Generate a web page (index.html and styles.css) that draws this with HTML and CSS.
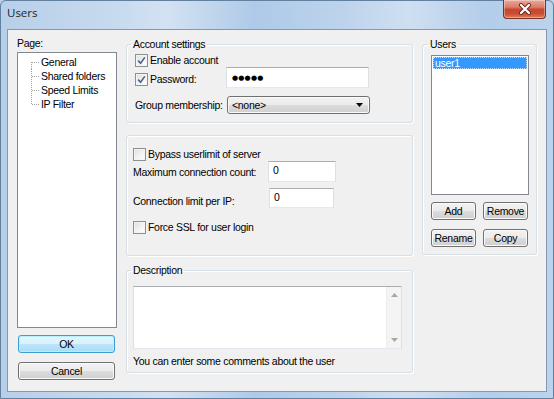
FILE: index.html
```html
<!DOCTYPE html>
<html>
<head>
<meta charset="utf-8">
<title>Users</title>
<link rel="stylesheet" href="styles.css">
</head>
<body>
<div class="window">
  <div class="titlebar">
    <span class="title">Users</span>
    <div class="close">
      <svg width="14" height="12" viewBox="0 0 14 12"><path d="M3 2 L11 10 M11 2 L3 10" stroke="#6b2a20" stroke-width="4" stroke-linecap="round"/><path d="M3 2 L11 10 M11 2 L3 10" stroke="#fff" stroke-width="2.2" stroke-linecap="round"/></svg>
    </div>
  </div>
  <div class="client">
    <div class="col-left">
      <div class="page-label">Page:</div>
      <div class="tree">
        <div class="tree-item"><svg class="conn" width="9" height="14"><path d="M0.5 7 V14 M1 7.5 H9" stroke="#a0a0a0" stroke-dasharray="1 1"/></svg><span>General</span></div>
        <div class="tree-item"><svg class="conn" width="9" height="14"><path d="M0.5 0 V14 M1 7.5 H9" stroke="#a0a0a0" stroke-dasharray="1 1"/></svg><span>Shared folders</span></div>
        <div class="tree-item"><svg class="conn" width="9" height="14"><path d="M0.5 0 V14 M1 7.5 H9" stroke="#a0a0a0" stroke-dasharray="1 1"/></svg><span>Speed Limits</span></div>
        <div class="tree-item"><svg class="conn" width="9" height="14"><path d="M0.5 0 V7 M1 7.5 H9" stroke="#a0a0a0" stroke-dasharray="1 1"/></svg><span>IP Filter</span></div>
      </div>
      <div class="btn btn-default btn-ok">OK</div>
      <div class="btn btn-cancel">Cancel</div>
    </div>

    <div class="col-mid">
      <fieldset class="group g-account">
        <legend>Account settings</legend>
        <div class="inner">
          <label class="check-row"><span class="cb checked"><svg width="9" height="9" viewBox="0 0 9 9"><path d="M1.2 4.6 L3.6 7.2 L7.8 1.4" fill="none" stroke="#4a5f8f" stroke-width="1.6"/></svg></span><span>Enable account</span></label>
          <div class="pw-row">
            <label class="check-row pw-label"><span class="cb checked"><svg width="9" height="9" viewBox="0 0 9 9"><path d="M1.2 4.6 L3.6 7.2 L7.8 1.4" fill="none" stroke="#4a5f8f" stroke-width="1.6"/></svg></span><span>Password:</span></label>
            <div class="textbox pw-box"><span class="dots">●●●●●</span></div>
          </div>
          <div class="grp-row">
            <span class="grp-label">Group membership:</span>
            <div class="combo"><span>&lt;none&gt;</span><svg width="7" height="4" viewBox="0 0 7 4"><path d="M0 0 H7 L3.5 4 Z" fill="#000"/></svg></div>
          </div>
        </div>
      </fieldset>

      <fieldset class="group g-limits">
        <div class="inner">
          <label class="check-row"><span class="cb"></span><span>Bypass userlimit of server</span></label>
          <div class="num-row row-max">
            <span class="num-label">Maximum connection count:</span>
            <div class="textbox num-box">0</div>
          </div>
          <div class="num-row row-ip">
            <span class="num-label">Connection limit per IP:</span>
            <div class="textbox num-box">0</div>
          </div>
          <label class="check-row row-ssl"><span class="cb"></span><span>Force SSL for user login</span></label>
        </div>
      </fieldset>

      <fieldset class="group g-desc">
        <legend>Description</legend>
        <div class="inner">
          <div class="memo">
            <div class="memo-body"></div>
            <div class="vscroll">
              <svg width="7" height="4" viewBox="0 0 7 4"><path d="M0 4 H7 L3.5 0 Z" fill="#a8a8a8"/></svg>
              <svg width="7" height="4" viewBox="0 0 7 4"><path d="M0 0 H7 L3.5 4 Z" fill="#a8a8a8"/></svg>
            </div>
          </div>
          <div class="hint">You can enter some comments about the user</div>
        </div>
      </fieldset>
    </div>

    <div class="col-right">
      <fieldset class="group g-users">
        <legend>Users</legend>
        <div class="inner">
          <div class="listbox">
            <div class="list-item selected">user1</div>
          </div>
          <div class="user-btns">
            <div class="btn">Add</div>
            <div class="btn">Remove</div>
            <div class="btn">Rename</div>
            <div class="btn">Copy</div>
          </div>
        </div>
      </fieldset>
    </div>
  </div>
</div>
</body>
</html>
```

FILE: styles.css
```css
* { box-sizing: border-box; }
html, body { margin: 0; padding: 0; }
body {
  width: 554px;
  height: 399px;
  overflow: hidden;
  font-family: "Liberation Sans", Arial, sans-serif;
  font-size: 10.5px;
  letter-spacing: -0.3px;
  color: #000;
  background: #b9d0ea;
}

.window {
  width: 554px;
  height: 399px;
  display: flex;
  flex-direction: column;
  border: 1px solid #62809f;
  border-radius: 6px 6px 0 0;
  background: linear-gradient(to right, #b8cfe9 0%, #c8dbef 22%, #d3e2f2 30%, #aecae8 46%, #bdd3ec 62%, #cfdff1 74%, #b3cdea 88%, #bcd3ec 100%);
}

.titlebar {
  height: 28px;
  display: flex;
  justify-content: space-between;
  align-items: flex-start;
}
.title {
  font-family: "Open Sans", "Liberation Sans", sans-serif;
  font-size: 11.5px;
  letter-spacing: 0;
  color: #1e1e1e;
  padding: 4px 0 0 6px;
}
.close {
  width: 43px;
  height: 19px;
  margin: -1px 7px 0 0;
  border: 1px solid #7b3024;
  border-top: none;
  border-radius: 0 0 4px 4px;
  background: linear-gradient(#eaa99a 0%, #dc7b67 40%, #c8472f 52%, #c94c33 75%, #dc7d5c 100%);
  box-shadow: inset 0 0 0 1px rgba(255,255,255,0.35);
  display: flex;
  align-items: center;
  justify-content: center;
}

.client {
  height: 363px;
  margin: 0 6px;
  border: 1px solid #8399b3;
  background: #f0f0f0;
  display: flex;
  padding: 0 9px;
  gap: 9px;
}

/* left column */
.col-left {
  width: 100px;
  display: flex;
  flex-direction: column;
  padding-top: 7px;
}
.page-label {
  line-height: 13px;
  height: 13px;
  margin-bottom: 2px;
}
.tree {
  height: 276px;
  background: #fff;
  border: 1px solid #828790;
  padding: 2px 0 0 13px;
}
.tree-item {
  display: flex;
  align-items: center;
  height: 14px;
  line-height: 14px;
}
.tree-item .conn { flex: none; margin-right: 1px; }

.btn {
  height: 18px;
  border: 1px solid #707070;
  border-radius: 3px;
  background: linear-gradient(#f2f2f2 0%, #ebebeb 50%, #dddddd 50%, #cfcfcf 100%);
  box-shadow: inset 0 0 0 1px #fbfbfb;
  display: flex;
  align-items: center;
  justify-content: center;
  line-height: 13px;
}
.btn-default {
  border-color: #3c9fd2;
  background: linear-gradient(#e6f5fd 0%, #d9f0fc 50%, #bde5fb 50%, #a8dcf7 100%);
  box-shadow: inset 0 0 0 1px #b5f0ff;
}
.btn-ok { margin: 7px 0 0 1px; width: 97px; }
.btn-cancel { margin: 9px 0 0 1px; width: 97px; }

/* middle column */
.col-mid {
  width: 287px;
  display: flex;
  flex-direction: column;
  padding-top: 8px;
}
.group {
  margin: 0;
  padding: 0;
  border: 1px solid #d5dfe5;
  border-radius: 3px;
  box-shadow: 1px 1px 0 #fff, inset 1px 1px 0 #fff;
  min-width: 0;
}
.group legend {
  padding: 0 2px;
  margin-left: 4px;
  line-height: 13px;
  height: 13px;
}

.g-account .inner { padding: 3px 0 8px 8px; }
.check-row {
  display: flex;
  align-items: center;
  height: 13px;
  line-height: 13px;
}
.cb {
  flex: none;
  width: 13px;
  height: 13px;
  border: 1px solid #8e8f8f;
  background: linear-gradient(135deg, #dcdcdc 0%, #f3f3f3 55%, #ffffff 100%);
  box-shadow: inset 0 0 0 1px #f4f4f4;
  margin-right: 2px;
  display: flex;
  align-items: center;
  justify-content: center;
}
.pw-row {
  display: grid;
  grid-template-columns: 91px 143px;
  height: 21px;
}
.pw-label { margin-top: 6px; }
.textbox {
  background: #fff;
  border: 1px solid #dbdfe6;
  border-top-color: #abadb3;
  border-bottom-color: #e3e9ef;
}
.pw-box {
  height: 21px;
  display: flex;
  align-items: center;
  padding-left: 5px;
}
.dots {
  font-family: "DejaVu Sans", sans-serif;
  font-size: 7px;
  letter-spacing: 0.2px;
  line-height: 10px;
}
.grp-row {
  display: grid;
  grid-template-columns: 92px 143px;
  align-items: center;
  margin-top: 8px;
  height: 18px;
}
.combo {
  height: 18px;
  border: 1px solid #707070;
  border-radius: 3px;
  background: linear-gradient(#f2f2f2 0%, #ebebeb 50%, #dddddd 50%, #cfcfcf 100%);
  box-shadow: inset 0 0 0 1px #fbfbfb;
  display: flex;
  align-items: center;
  justify-content: space-between;
  padding: 0 6px 0 4px;
}

.g-limits { margin-top: 12px; }
.g-limits .inner { padding: 12px 0 21px 6px; }
.num-row {
  display: grid;
  grid-template-columns: 135px auto;
  align-items: start;
}
.row-max { height: 21px; }
.row-max .num-label { padding-top: 5px; line-height: 13px; }
.row-max .num-box { width: 68px; height: 21px; }
.row-ip { height: 20px; margin-top: 6px; }
.row-ip .num-label { padding-top: 7px; line-height: 13px; }
.row-ip .num-box { width: 65px; height: 20px; margin-left: 1px; }
.num-box { padding: 2px 0 0 4px; line-height: 13px; }
.row-ssl { margin-top: 13px; }

.g-desc { margin-top: 8px; }
.g-desc .inner { padding: 9px 10px 4px 6px; }
.memo {
  height: 63px;
  display: flex;
  background: #fff;
  border: 1px solid #dbdfe6;
  border-top-color: #abadb3;
  border-bottom-color: #e3e9ef;
}
.memo-body { flex: 1; }
.vscroll {
  width: 15px;
  background: #f4f4f4;
  border-left: 1px solid #ececec;
  display: flex;
  flex-direction: column;
  align-items: center;
  justify-content: space-between;
  padding: 6px 0 6px;
}
.hint {
  margin-top: 6px;
  line-height: 13px;
  height: 13px;
}

/* right column */
.col-right {
  width: 115px;
  padding-top: 8px;
}
.g-users legend { margin-left: 5px; }
.g-users .inner { padding: 4px 0 7px 8px; }
.listbox {
  width: 98px;
  height: 140px;
  background: #fff;
  border: 1px solid #828790;
  padding: 1px;
}
.list-item {
  height: 12px;
  line-height: 12px;
  padding-left: 2px;
}
.list-item.selected {
  background: #3399ff;
  color: #fff;
  outline: 1px dotted #b9dcff;
  outline-offset: -1px;
}
.user-btns {
  display: grid;
  grid-template-columns: 45px 45px;
  column-gap: 7px;
  row-gap: 9px;
  margin-top: 7px;
}
```
